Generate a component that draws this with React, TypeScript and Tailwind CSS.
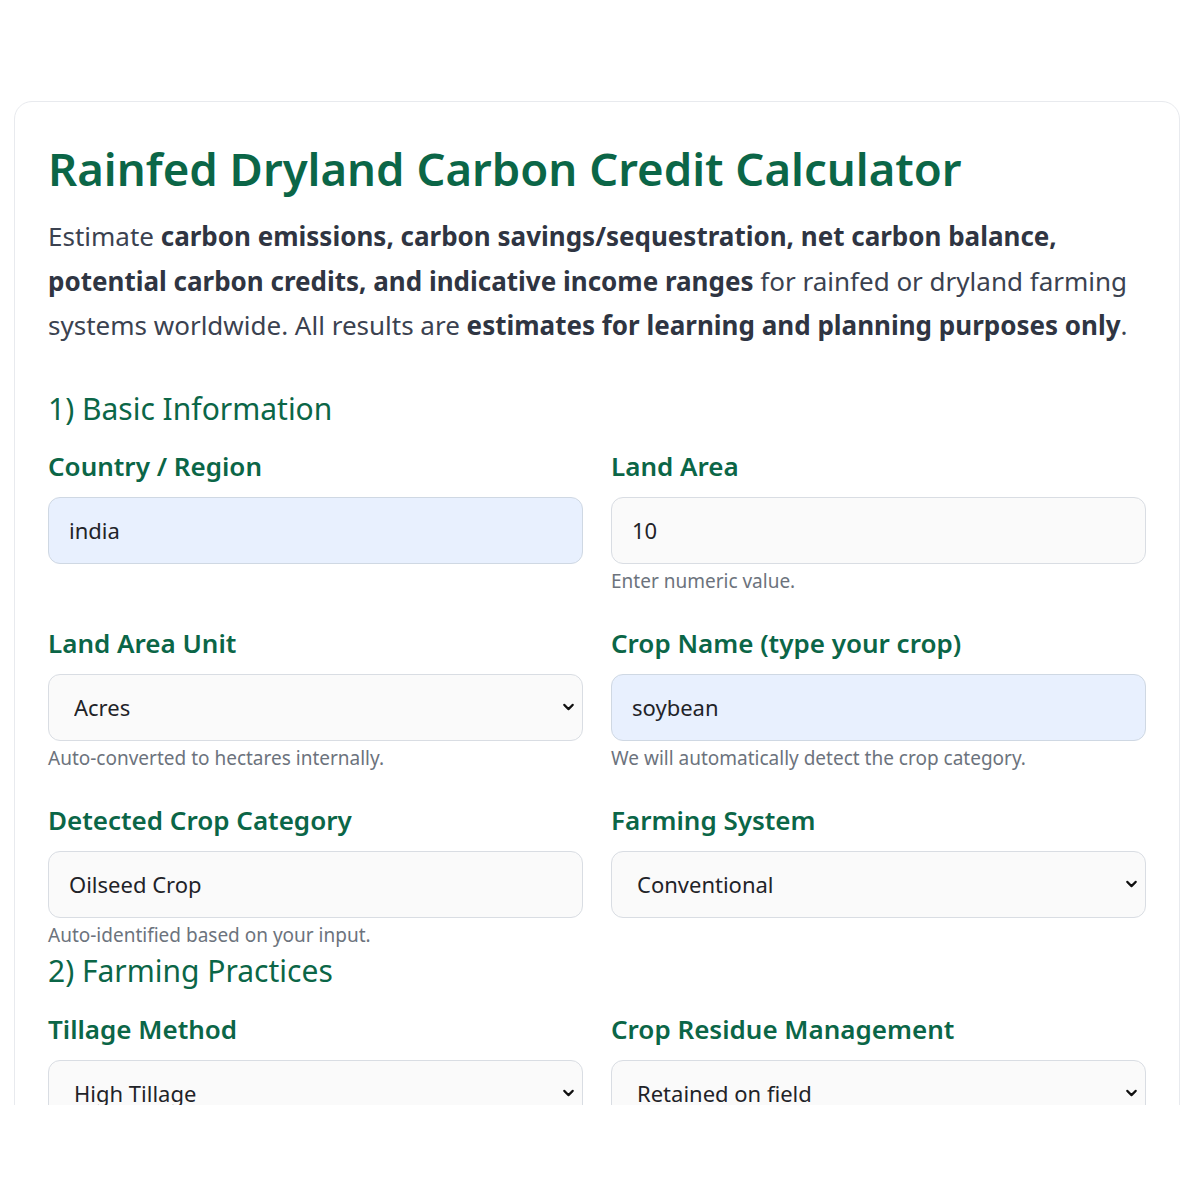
import { ChevronDown } from "lucide-react";

type Field = {
  label: string;
  value: string;
  kind: "input" | "select";
  filled?: boolean;
  help?: string;
};

const basicFields: Field[] = [
  { label: "Country / Region", value: "india", kind: "input", filled: true },
  { label: "Land Area", value: "10", kind: "input", help: "Enter numeric value." },
  { label: "Land Area Unit", value: "Acres", kind: "select", help: "Auto-converted to hectares internally." },
  {
    label: "Crop Name (type your crop)",
    value: "soybean",
    kind: "input",
    filled: true,
    help: "We will automatically detect the crop category.",
  },
  { label: "Detected Crop Category", value: "Oilseed Crop", kind: "input", help: "Auto-identified based on your input." },
  { label: "Farming System", value: "Conventional", kind: "select" },
];

const practiceFields: Field[] = [
  { label: "Tillage Method", value: "High Tillage", kind: "select" },
  { label: "Crop Residue Management", value: "Retained on field", kind: "select" },
];

const FormField = ({ field }: { field: Field }) => {
  return (
    <div className="flex flex-col">
      <label className="mb-[16px] text-[26px] font-semibold leading-[30px] text-[#0b6647]">{field.label}</label>
      {field.kind === "input" ? (
        <input
          readOnly
          defaultValue={field.value}
          className={`h-[67px] w-full rounded-[12px] border px-[20px] text-[22px] text-[#1f2328] outline-none ${
            field.filled ? "border-[#cfd8e3] bg-[#e8f0fe]" : "border-[#d9dde3] bg-[#fafafa]"
          }`}
        />
      ) : (
        <div className="relative">
          <select
            defaultValue={field.value}
            className="h-[67px] w-full appearance-none rounded-[12px] border border-[#d9dde3] bg-[#fafafa] pl-[25px] pr-[40px] text-[22px] text-[#1f2328] outline-none"
          >
            <option>{field.value}</option>
          </select>
          <ChevronDown
            className="pointer-events-none absolute right-[6px] top-1/2 h-[17px] w-[17px] -translate-y-1/2 text-[#111]"
            strokeWidth={3}
          />
        </div>
      )}
      {field.help && <p className="mt-[4px] text-[19px] leading-[26px] text-[#6c737d]">{field.help}</p>}
    </div>
  );
};

const App = () => {
  return (
    <div className="h-[1200px] bg-white" style={{ fontFamily: '"Noto Sans", "Open Sans", sans-serif' }}>
      <div className="h-[1105px] overflow-hidden pl-[14px] pr-[20px] pt-[101px]">
        <div className="rounded-[18px] border border-[#e8eaee] bg-white px-[33px] pb-[40px] pt-[36px]">
          <h1 className="text-[45.5px] font-semibold leading-[60px] text-[#0b6647]">
            Rainfed Dryland Carbon Credit Calculator
          </h1>
          <p className="mt-[16px] text-[26px] leading-[44.5px] text-[#3b4250]">
            Estimate{" "}
            <strong className="font-bold text-[#2f3542]">
              carbon emissions, carbon savings/sequestration, net carbon balance, potential carbon credits, and
              indicative income ranges
            </strong>{" "}
            for rainfed or dryland farming systems worldwide. All results are{" "}
            <strong className="font-bold text-[#2f3542]">estimates for learning and planning purposes only</strong>.
          </p>

          <h2 className="mt-[43px] text-[30px] leading-[36px] text-[#0b6647]">1) Basic Information</h2>
          <div className="mt-[24px] grid grid-cols-2 gap-x-[28px] gap-y-[34px]">
            {basicFields.map((field) => (
              <FormField key={field.label} field={field} />
            ))}
          </div>

          <h2 className="mt-[5px] text-[30px] leading-[36px] text-[#0b6647]">2) Farming Practices</h2>
          <div className="mt-[25px] grid grid-cols-2 gap-x-[28px] gap-y-[34px]">
            {practiceFields.map((field) => (
              <FormField key={field.label} field={field} />
            ))}
          </div>
        </div>
      </div>
    </div>
  );
};

export default App;
